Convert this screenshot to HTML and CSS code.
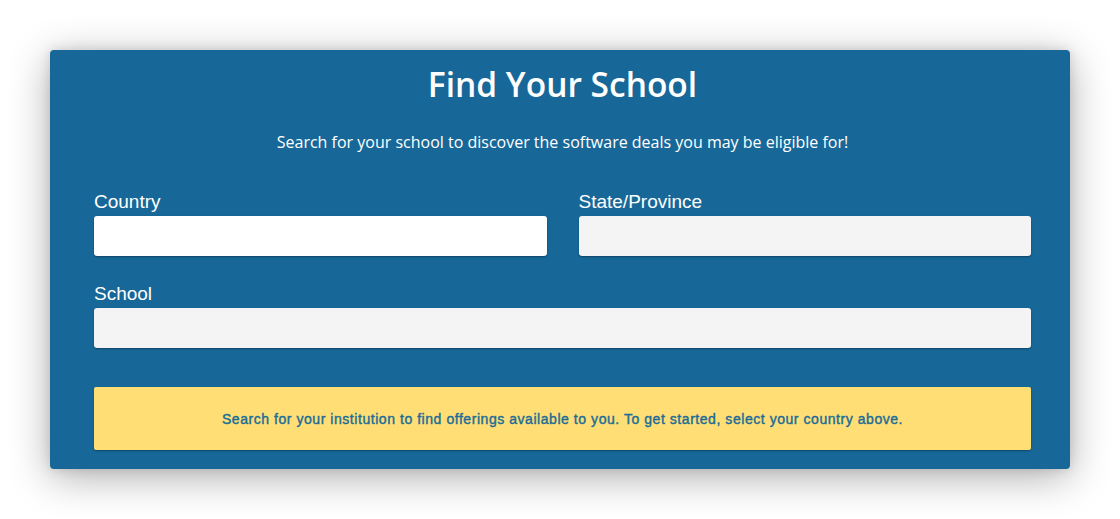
FILE: index.html
```html
<!DOCTYPE html>
<html lang="en">
<head>
<meta charset="utf-8">
<title>Find Your School</title>
<link rel="stylesheet" href="styles.css">
</head>
<body>
<main class="card">
  <h1 class="title">Find Your School</h1>
  <p class="subtitle">Search for your school to discover the software deals you may be eligible for!</p>
  <div class="row">
    <div class="field">
      <label class="label">Country</label>
      <div class="input input-white"></div>
    </div>
    <div class="field">
      <label class="label">State/Province</label>
      <div class="input"></div>
    </div>
  </div>
  <div class="field field-school">
    <label class="label">School</label>
    <div class="input"></div>
  </div>
  <div class="notice">Search for your institution to find offerings available to you. To get started, select your country above.</div>
</main>
</body>
</html>
```
FILE: styles.css
```css
html, body {
  margin: 0;
  padding: 0;
  background: #ffffff;
  width: 1120px;
  height: 519px;
  overflow: hidden;
}
.card {
  box-sizing: border-box;
  margin: 50px 0 0 50px;
  width: 1020px;
  height: 419px;
  padding: 14px 39px 19px 44px;
  background: #176898;
  border-radius: 4px;
  box-shadow: 0 8px 40px rgba(0, 0, 0, 0.32), 0 0 12px rgba(0,0,0,0.12);
  display: flex;
  flex-direction: column;
}
.title {
  margin: 0;
  font-family: "Open Sans", sans-serif;
  font-weight: 600;
  font-size: 33.5px;
  line-height: 40px;
  color: #ffffff;
  text-align: center;
}
.subtitle {
  margin: 26px 0 0;
  font-family: "Open Sans", sans-serif;
  font-size: 16px;
  line-height: 24px;
  color: #ffffff;
  text-align: center;
}
.row {
  margin-top: 37px;
  display: grid;
  grid-template-columns: 1fr 1fr;
  column-gap: 32px;
}
.field {
  display: flex;
  flex-direction: column;
  gap: 3px;
}
.field-school {
  margin-top: 27px;
}
.label {
  font-family: "Liberation Sans", Arial, sans-serif;
  font-size: 19px;
  line-height: 22px;
  color: #ffffff;
}
.input {
  height: 40px;
  background: #f4f4f4;
  border-radius: 3px;
  box-shadow: 0 1px 2px rgba(0, 0, 0, 0.35);
}
.input-white {
  background: #ffffff;
}
.notice {
  margin-top: 39px;
  height: 63px;
  display: flex;
  align-items: center;
  justify-content: center;
  background: #ffdf75;
  border-radius: 2px;
  box-shadow: 0 1px 2px rgba(0, 0, 0, 0.35);
  font-family: "Liberation Sans", Arial, sans-serif;
  font-weight: 400;
  font-size: 14px;
  letter-spacing: 0.55px;
  -webkit-text-stroke: 0.4px #1b6c97;
  color: #1b6c97;
}
```
